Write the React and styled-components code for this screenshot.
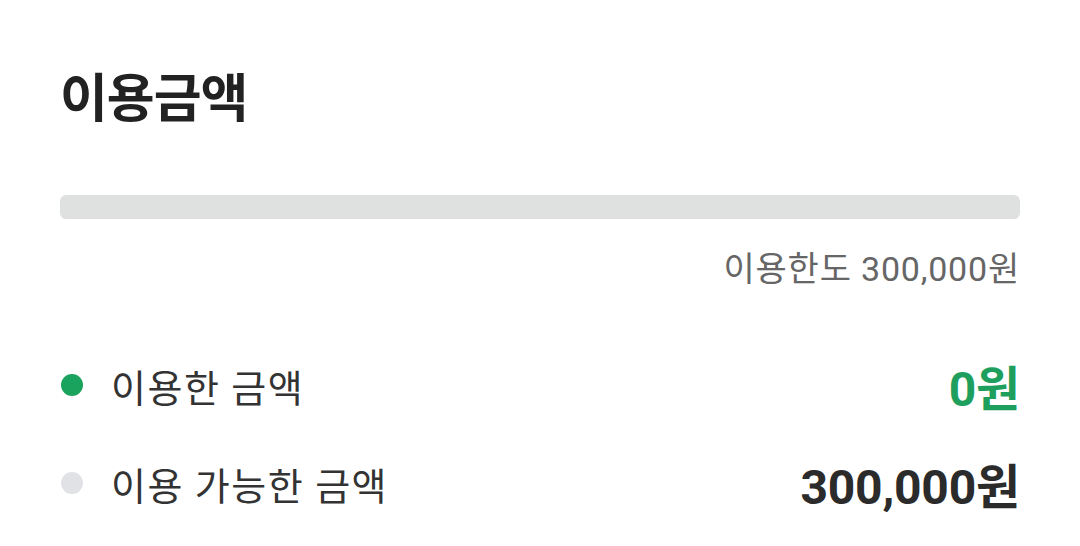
import React from 'react'
import styled, { createGlobalStyle } from 'styled-components'

const GlobalStyle = createGlobalStyle`
  body {
    margin: 0;
    background: #fff;
    font-family: Roboto, "Noto Sans CJK KR", sans-serif;
  }
`

const Section = styled.section`
  padding: 62px 60px 0 60px;
  display: flex;
  flex-direction: column;
`

const Title = styled.h2`
  margin: 0;
  font-size: 52px;
  font-weight: 700;
  letter-spacing: -1px;
  color: #222;
  line-height: 76px;
`

const Track = styled.div`
  margin-top: 57px;
  height: 24px;
  border-radius: 6px;
  background: #dfe1e1;
  overflow: hidden;
`

const Fill = styled.div`
  height: 100%;
  background: #1aa35c;
`

const Limit = styled.p`
  margin: 28px 0 0 0;
  text-align: right;
  font-size: 34px;
  letter-spacing: 0.8px;
  color: #666;
  line-height: 44px;
`

const List = styled.ul`
  list-style: none;
  margin: 65px 0 0 0;
  padding: 0;
  display: flex;
  flex-direction: column;
  gap: 40px;
`

const Row = styled.li`
  display: flex;
  align-items: center;
  height: 58px;
`

const Dot = styled.span`
  width: 22px;
  height: 22px;
  border-radius: 50%;
  background: ${p => p.color};
  margin: 0 28px 0 1px;
  flex-shrink: 0;
`

const Label = styled.span`
  flex: 1;
  font-size: 38px;
  letter-spacing: 1.5px;
  color: #333;
`

const Amount = styled.span`
  font-size: 48px;
  font-weight: 700;
  letter-spacing: -0.2px;
  color: ${p => p.color};
`

const limit = 300000
const used = 0

const fmt = n => n.toLocaleString('en-US') + '원'

export default function App() {
  return (
    <>
      <GlobalStyle />
      <Section>
        <Title>이용금액</Title>
        <Track>
          <Fill style={{ width: `${(used / limit) * 100}%` }} />
        </Track>
        <Limit>이용한도 {fmt(limit)}</Limit>
        <List>
          <Row>
            <Dot color="#1aa35c" />
            <Label>이용한 금액</Label>
            <Amount color="#1f9f5e">{fmt(used)}</Amount>
          </Row>
          <Row>
            <Dot color="#e0e2e6" />
            <Label>이용 가능한 금액</Label>
            <Amount color="#2b2b2b">{fmt(limit - used)}</Amount>
          </Row>
        </List>
      </Section>
    </>
  )
}
